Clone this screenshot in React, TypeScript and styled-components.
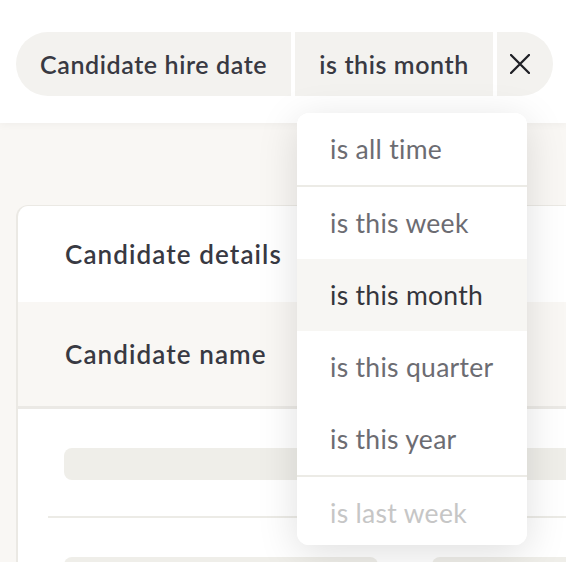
import styled, { createGlobalStyle } from "styled-components";

const GlobalStyle = createGlobalStyle`
  html, body {
    margin: 0;
    padding: 0;
    height: 562px;
    overflow: hidden;
    background: #f9f7f4;
  }
  body {
    font-family: Lato, "Liberation Sans", sans-serif;
    color: #383942;
  }
`;

const Screen = styled.div`
  position: relative;
  width: 566px;
  height: 562px;
  overflow: hidden;
`;

const TopBar = styled.header`
  height: 123px;
  box-sizing: border-box;
  padding: 32px 16px 0;
  background: #fff;
  box-shadow: 0 2px 8px rgba(0, 0, 0, 0.04);
  position: relative;
  z-index: 1;
`;

const FilterPill = styled.div`
  display: inline-flex;
  gap: 4px;
  height: 64px;
`;

const Segment = styled.button<{ $first?: boolean; $last?: boolean }>`
  display: flex;
  align-items: center;
  justify-content: ${(p) => (p.$last ? "flex-start" : "center")};
  flex: none;
  box-sizing: border-box;
  border: none;
  margin: 0;
  white-space: nowrap;
  background: #f3f2ef;
  color: #383942;
  font-family: inherit;
  font-size: 25px;
  font-weight: 600;
  letter-spacing: 0.6px;
  width: ${(p) => (p.$last ? "56px" : "auto")};
  padding: ${(p) => (p.$last ? "0 0 0 13px" : "0 24px")};
  border-radius: ${(p) => (p.$first ? "32px 0 0 32px" : p.$last ? "0 32px 32px 0" : "0")};
`;

const CloseIcon = () => (
  <svg width="20" height="20" viewBox="0 0 20 20" fill="none">
    <path d="M1 1L19 19M19 1L1 19" stroke="#1f2026" strokeWidth="2.3" strokeLinecap="round" />
  </svg>
);

const Page = styled.main`
  padding: 82px 0 0 16px;
`;

const Card = styled.section`
  width: 640px;
  background: #fff;
  border: 1px solid #ebe9e4;
  border-left-width: 2px;
  border-right: none;
  border-radius: 12px 0 0 0;
`;

const CardTitle = styled.h2`
  margin: 0;
  height: 96px;
  display: flex;
  align-items: center;
  padding-left: 47px;
  font-size: 26px;
  font-weight: 600;
  letter-spacing: 1.1px;
  color: #383942;
`;

const HeaderRow = styled.div`
  height: 104px;
  display: flex;
  align-items: center;
  padding-left: 47px;
  background: #f9f7f4;
  border-bottom: 3px solid #ebe9e5;
  font-size: 26px;
  font-weight: 600;
  letter-spacing: 1.1px;
`;

const BodyRow = styled.div`
  display: flex;
  gap: 54px;
  margin-left: 30px;
  padding: 39px 0 36px 16px;
  border-bottom: 2px solid #ecebe6;
`;

const Skeleton = styled.div<{ $width?: number }>`
  height: 32px;
  border-radius: 8px;
  background: #efeee9;
  flex: ${(p) => (p.$width ? `0 0 ${p.$width}px` : "1")};
`;

const Menu = styled.ul`
  position: absolute;
  left: 297px;
  top: 113px;
  width: 230px;
  height: 432px;
  margin: 0;
  padding: 0;
  list-style: none;
  background: #fff;
  border-radius: 12px;
  overflow: hidden;
  box-shadow: 0 8px 40px rgba(0, 0, 0, 0.13);
  z-index: 2;
`;

const MenuItem = styled.li<{ $active?: boolean; $faded?: boolean; $divider?: boolean }>`
  height: 72px;
  display: flex;
  align-items: center;
  padding-left: 33px;
  font-size: 26.5px;
  font-weight: 400;
  letter-spacing: 0.3px;
  background: ${(p) => (p.$active ? "#f7f6f3" : "#fff")};
  color: ${(p) => (p.$active ? "#34353c" : p.$faded ? "#c6c6c6" : "#6c6c72")};
  border-bottom: ${(p) => (p.$divider ? "2px solid #ecebe6" : "none")};
`;

const options = [
  { label: "is all time", divider: true },
  { label: "is this week" },
  { label: "is this month", active: true },
  { label: "is this quarter" },
  { label: "is this year", divider: true },
  { label: "is last week", faded: true },
];

export default function App() {
  return (
    <Screen>
      <GlobalStyle />
      <TopBar>
        <FilterPill>
          <Segment $first>Candidate hire date</Segment>
          <Segment>is this month</Segment>
          <Segment $last>
            <CloseIcon />
          </Segment>
        </FilterPill>
      </TopBar>
      <Page>
        <Card>
          <CardTitle>Candidate details</CardTitle>
          <HeaderRow>Candidate name</HeaderRow>
          <BodyRow>
            <Skeleton />
          </BodyRow>
          <BodyRow>
            <Skeleton $width={314} />
            <Skeleton />
          </BodyRow>
        </Card>
      </Page>
      <Menu>
        {options.map((o) => (
          <MenuItem key={o.label} $active={o.active} $faded={o.faded} $divider={o.divider}>
            {o.label}
          </MenuItem>
        ))}
      </Menu>
    </Screen>
  );
}
